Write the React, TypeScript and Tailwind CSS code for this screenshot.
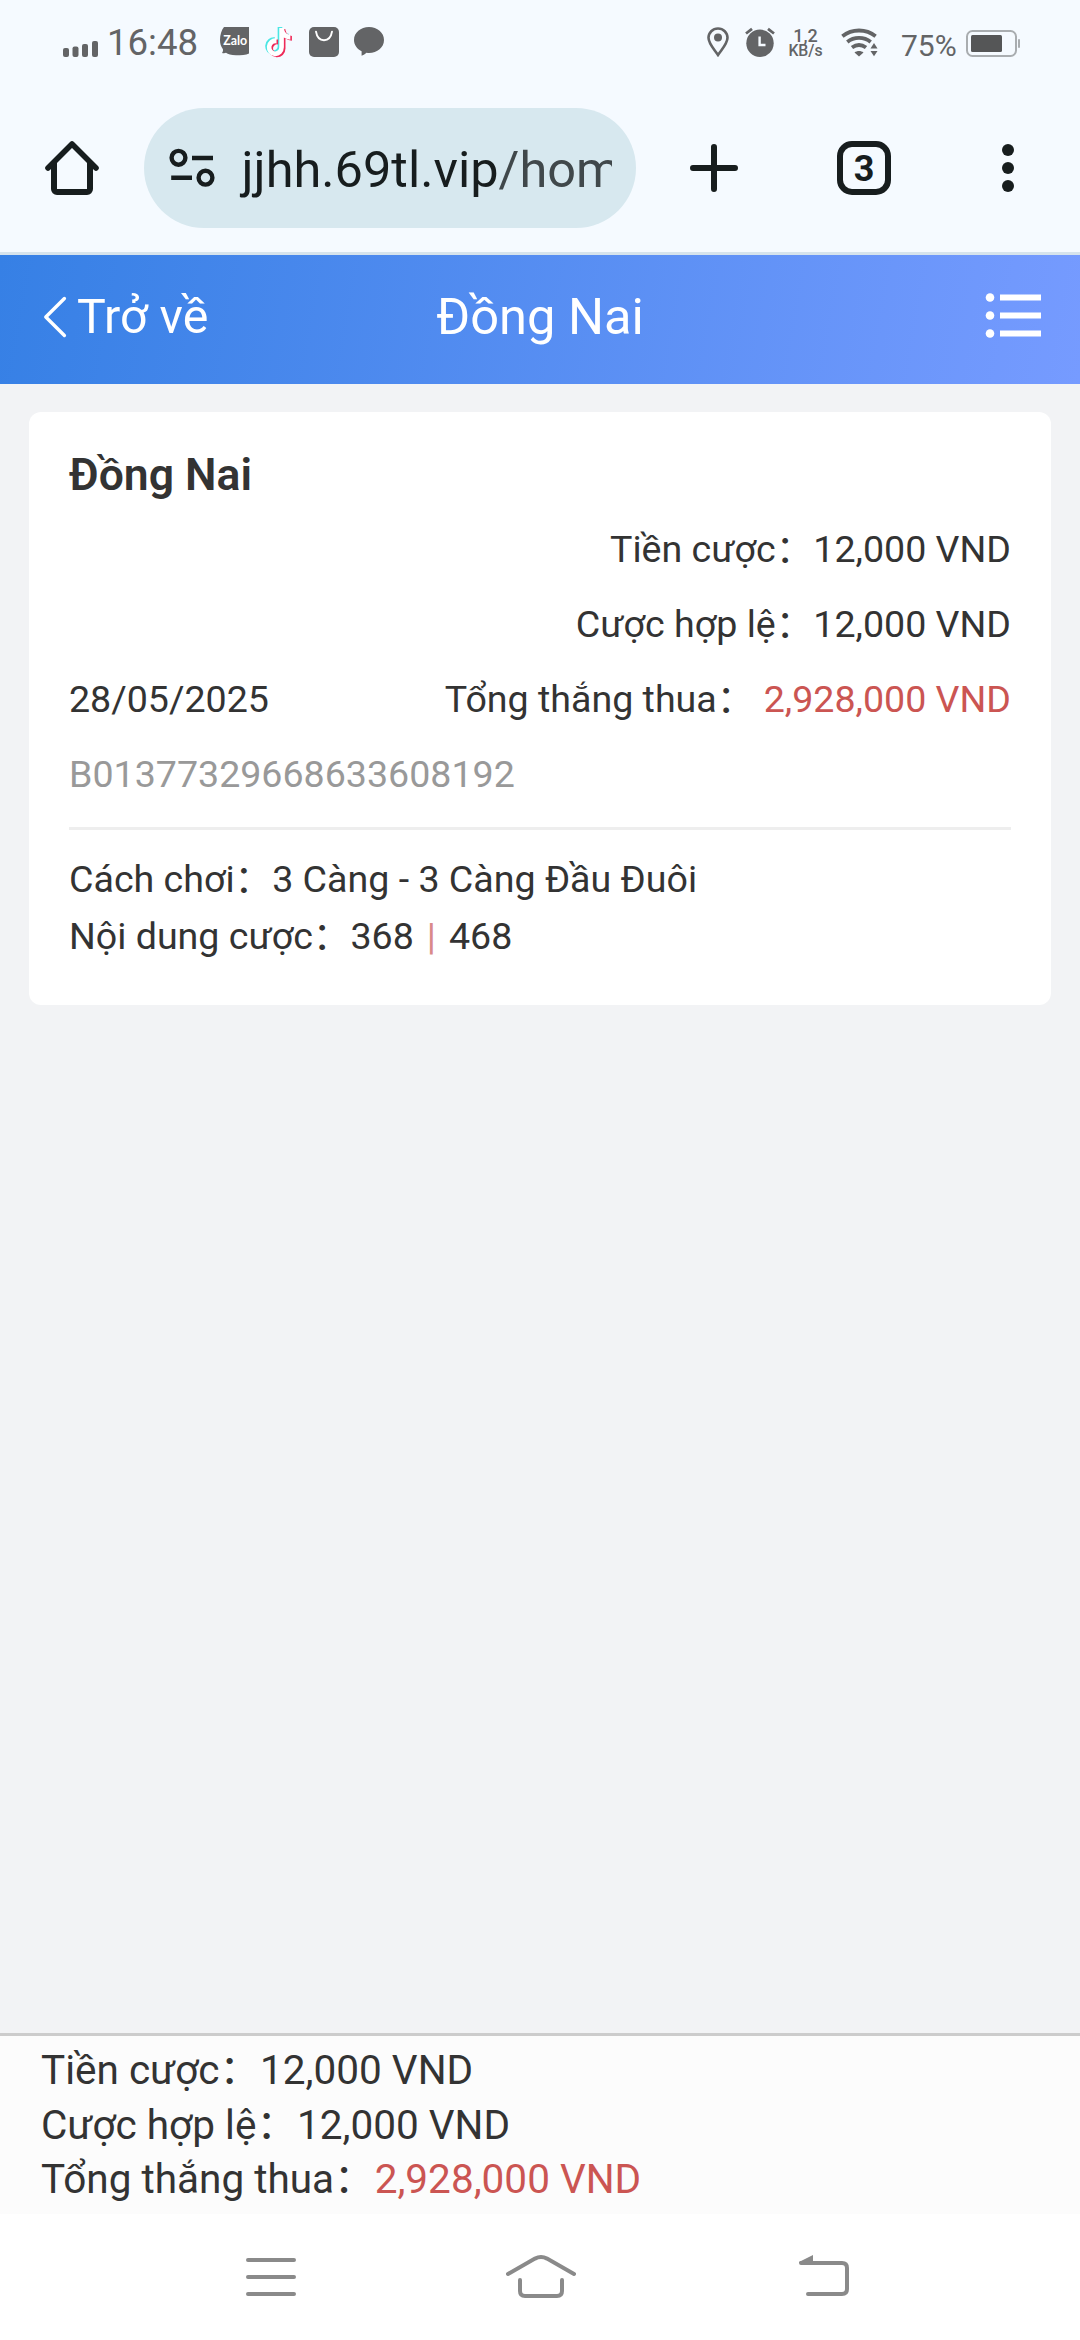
import React from 'react';

interface BetRecord {
  name: string;
  date: string;
  orderId: string;
  stake: string;
  valid: string;
  result: string;
  play: string;
  numbers: [string, string];
}

const record: BetRecord = {
  name: 'Đồng Nai',
  date: '28/05/2025',
  orderId: 'B01377329668633608192',
  stake: '12,000 VND',
  valid: '12,000 VND',
  result: '2,928,000 VND',
  play: '3 Càng - 3 Càng Đầu Đuôi',
  numbers: ['368', '468'],
};

const TIKTOK_NOTE =
  'M448,209.91a210.06,210.06,0,0,1-122.77-39.25V349.38A162.55,162.55,0,1,1,185,188.31V278.2a74.62,74.62,0,1,0,52.23,71.18V0l88,0a121.18,121.18,0,0,0,1.86,22.17h0A122.18,122.18,0,0,0,381,102.39a121.43,121.43,0,0,0,67,20.14Z';

function StatusBar() {
  return (
    <div className="h-[84px] shrink-0 flex items-center pl-[62px] pr-[60px] text-[#636466]">
      {/* Signal */}
      <svg className="w-[36px] h-[30px]" viewBox="0 0 36 30" fill="#636466">
        <rect x="1" y="21" width="6" height="9" rx="2" />
        <rect x="10.5" y="19.5" width="6" height="10.5" rx="2" />
        <rect x="20" y="17" width="6" height="13" rx="2" />
        <rect x="30" y="14" width="6" height="16" rx="2" />
      </svg>
      <span className="ml-[9px] pt-[3px] w-[91px] text-[36.6px] leading-none whitespace-nowrap">16:48</span>

      {/* Notifications */}
      <svg className="ml-[22px] w-[29px] h-[30px]" viewBox="0 0 29 30">
        <path d="M4 0H29V26.5C26 28 21 28.2 16 28.2C11 28.2 8 27.2 6 25.8C5 26.2 3.5 26.3 2 25.9C3 24.8 3.3 23.5 2.8 22C1 19.5 0 17 0 13C0 8 1.5 3 4 0Z" fill="#636466" />
        <text x="3.2" y="18.2" textLength="24" lengthAdjust="spacingAndGlyphs" className="font-['Lato'] font-bold text-[12.5px]" fill="#fff">
          Zalo
        </text>
      </svg>
      <svg className="ml-[16px] w-[28px] h-[31px]" viewBox="0 0 28 31">
        <path d={TIKTOK_NOTE} transform="translate(0.2 0) scale(0.0525 0.055)" fill="#4be6e4" />
        <path d={TIKTOK_NOTE} transform="translate(3.4 2.2) scale(0.0525 0.055)" fill="#ee2a58" />
        <path d={TIKTOK_NOTE} transform="translate(1.8 1.1) scale(0.0525 0.055)" fill="#fff" />
      </svg>
      <svg className="ml-[16px] w-[30px] h-[30px]" viewBox="0 0 30 30">
        <rect width="30" height="30" rx="5" fill="#636466" />
        <path d="M7 4.6C8 10.6 11 13.2 15 13.2C19 13.2 22 10.6 23 4.6" stroke="#fff" strokeWidth="1.9" fill="none" strokeLinecap="round" />
      </svg>
      <svg className="ml-[15px] w-[30px] h-[30px]" viewBox="0 0 30 30" fill="#636466">
        <path d="M15 0C23.3 0 30 5.6 30 13C30 20.4 23.3 26 15 26C13.8 26 13.2 26 12.5 25.8C11.2 27 9.5 28 7.6 28.8V24.2C3 22 0 17.8 0 13C0 5.6 6.7 0 15 0Z" />
      </svg>

      <div className="ml-auto flex items-center">
        <svg className="w-[22px] h-[30px]" viewBox="0 0 22 30">
          <path d="M11 1.5C5.7 1.5 1.5 5.6 1.5 10.8C1.5 16.5 6.5 21.5 11 28C15.5 21.5 20.5 16.5 20.5 10.8C20.5 5.6 16.3 1.5 11 1.5Z" fill="none" stroke="#636466" strokeWidth="2.6" />
          <circle cx="11" cy="10.6" r="4" fill="#636466" />
        </svg>
        {/* Alarm */}
        <svg className="ml-[16px] w-[30px] h-[30px]" viewBox="0 0 30 30">
          <circle cx="15" cy="16.2" r="13.7" fill="#636466" />
          <path d="M1 6.5L7 1.8M29 6.5L23 1.8" stroke="#636466" strokeWidth="2.8" />
          <path d="M14.6 9.5V18H20.5" stroke="#f5faff" strokeWidth="2.4" fill="none" />
        </svg>
        <div className="ml-[13px] pt-[2px] w-[35px] flex flex-col items-center font-medium whitespace-nowrap">
          <span className="text-[18px] leading-[15px]">1,2</span>
          <span className="text-[15.8px] leading-[16px]">KB/s</span>
        </div>
        {/* Wifi with traffic arrows */}
        <svg className="ml-[18px] w-[38px] h-[30px]" viewBox="0 0 38 30">
          <g fill="none" stroke="#636466" strokeWidth="3.8">
            <path d="M1.4 9.2C11 1.6 25 1.6 34.6 9.2" />
            <path d="M6.3 15C13 9.6 23 9.6 29.7 15" />
            <path d="M11 20.6C15.5 17.2 20.5 17.2 25 20.6" />
          </g>
          <path d="M13.5 25.4C16 23.4 20 23.4 22.5 25.4L18 29.5Z" fill="#636466" />
          <path d="M33 16L36.5 21.5H29.5Z" fill="#636466" />
          <path d="M33 29.2L36.5 24H29.5Z" fill="#636466" />
        </svg>
        <span className="ml-[22px] pt-[7px] w-[56px] text-[30px] leading-none">75%</span>
        <svg className="ml-[9px] w-[54px] h-[30px]" viewBox="0 0 54 30">
          <rect x="1" y="4" width="49" height="25" rx="5.5" fill="none" stroke="#a9adb0" strokeWidth="2" />
          <rect x="5" y="8" width="31" height="17" rx="1.5" fill="#555657" />
          <rect x="52" y="12" width="2" height="9" rx="1" fill="#a9adb0" />
        </svg>
      </div>
    </div>
  );
}

function BrowserBar() {
  return (
    <div className="h-[171px] shrink-0 flex items-center pl-[42px] border-b-3 border-[#d6e3ec]">
      <svg className="w-[60px] h-[60px]" viewBox="0 0 60 60" fill="none" stroke="#171d1e" strokeWidth="6">
        <path d="M6 30L30 6L54 30" strokeLinecap="round" strokeLinejoin="round" strokeWidth="5.6" />
        <path d="M12 25V51A3 3 0 0 0 15 54H45A3 3 0 0 0 48 51V25" />
      </svg>

      <div className="ml-[42px] w-[492px] h-[120px] rounded-full bg-[#d7e8ef] flex items-center px-6">
        <svg className="w-[48px] h-[48px] shrink-0" viewBox="0 0 48 48" fill="none" stroke="#171d1e" strokeWidth="4.4">
          <circle cx="10.5" cy="13.8" r="6.9" />
          <circle cx="37.5" cy="33.7" r="6.9" />
          <path d="M24 14H45M3.2 33.7H24" />
        </svg>
        <div className="ml-5 pl-[5.5px] pt-[3px] flex-1 overflow-hidden whitespace-nowrap text-[50.5px] leading-[70px] text-[#171d1e]">
          jjhh.69tl.vip<span className="text-[#40484b]">/hom</span>
        </div>
      </div>

      <svg className="ml-[54px] w-[48px] h-[48px]" viewBox="0 0 48 48" stroke="#171d1e" strokeWidth="6" strokeLinecap="round">
        <path d="M24 3V45M3 24H45" />
      </svg>
      <div className="ml-[99px] pt-[2px] w-[54px] h-[54px] rounded-[15px] border-6 border-[#171d1e] flex items-center justify-center text-[36px] leading-none font-bold text-[#171d1e]">
        3
      </div>
      <svg className="ml-[111px] w-[12px] h-[48px]" viewBox="0 0 12 48" fill="#171d1e">
        <circle cx="6" cy="6" r="6" />
        <circle cx="6" cy="24" r="6" />
        <circle cx="6" cy="42" r="6" />
      </svg>
    </div>
  );
}

function PageHeader() {
  return (
    <header className="h-[129px] shrink-0 grid grid-cols-[1fr_auto_1fr] items-center px-[38px] pb-[5px] bg-[linear-gradient(100deg,#3680e5,#769bff)] text-white">
      <button className="flex items-center gap-[9px] pl-[4px] text-[48.3px] leading-none whitespace-nowrap">
        <svg className="w-[26px] h-[44px]" viewBox="0 0 26 44" fill="none" stroke="#fff" strokeWidth="3.4" strokeLinecap="round" strokeLinejoin="round">
          <path d="M22.4 3.5L3.8 22L22.4 40.5" />
        </svg>
        Trở về
      </button>
      <h1 className="text-[50.6px] leading-none">{record.name}</h1>
      <svg className="justify-self-end w-[57px] h-[48px]" viewBox="0 0 57 48" fill="#fff">
        <circle cx="5" cy="4.5" r="4.3" />
        <circle cx="5" cy="22.5" r="4.3" />
        <circle cx="5" cy="40.5" r="4.3" />
        <path d="M15 1.5H56V7.5H15ZM15 19.5H56V25.5H15ZM15 37.5H56V43.5H15Z" />
      </svg>
    </header>
  );
}

function BetCard() {
  return (
    <div className="mx-[29px] mt-7 h-[593px] rounded-xl bg-white px-10 pt-[33px] text-[37.6px] leading-[75px] text-[#333]">
      <h2 className="mb-[7px] text-[44.5px] leading-[60px] font-semibold">{record.name}</h2>
      <div className="text-right">Tiền cược：{record.stake}</div>
      <div className="text-right">Cược hợp lệ：{record.valid}</div>
      <div className="flex justify-between">
        <span>{record.date}</span>
        <span>
          Tổng thắng thua： <span className="text-[#cb5552]">{record.result}</span>
        </span>
      </div>
      <div className="text-[#999]">{record.orderId}</div>
      <div className="mt-[15px] pt-[21px] border-t-3 border-[#eee] leading-[57px]">
        <div>Cách chơi：{record.play}</div>
        <div>
          Nội dung cược：{record.numbers[0]}
          <span className="mx-[13px] text-[#d98a89]">|</span>
          {record.numbers[1]}
        </div>
      </div>
    </div>
  );
}

function Summary() {
  return (
    <footer className="h-[181px] shrink-0 border-t-3 border-[#ccc] bg-[#fcfcfc] pl-[41px] pt-[7px] text-[40.5px] leading-[54.5px] text-[#333]">
      <div>Tiền cược：{record.stake}</div>
      <div>Cược hợp lệ：{record.valid}</div>
      <div>
        Tổng thắng thua：<span className="text-[#cb5552]">{record.result}</span>
      </div>
    </footer>
  );
}

function SystemNav() {
  return (
    <nav className="h-[126px] shrink-0 flex items-center pl-[246px] bg-white">
      <svg className="w-[50px] h-[44px]" viewBox="0 0 50 44" stroke="#8a8a8a" strokeWidth="4" strokeLinecap="round">
        <path d="M2 5H48M2 22H48M2 39H48" />
      </svg>
      <svg className="ml-[210px] w-[70px] h-[44px]" viewBox="0 0 70 44" fill="none" stroke="#8a8a8a" strokeWidth="4" strokeLinecap="round">
        <path d="M2 19L29 3.6Q35 0.6 41 3.6L68 19" />
        <path d="M14 25V36Q14 41 19 41H51Q56 41 56 36V25" />
      </svg>
      <svg className="ml-[222px] w-[52px] h-[44px]" viewBox="0 0 52 44" fill="none" stroke="#8a8a8a" strokeWidth="4" strokeLinecap="round">
        <path d="M3 8H44Q49 8 49 13V34Q49 39 44 39H10" />
        <path d="M1 7L15 0V8H1Z" fill="#8a8a8a" stroke="none" />
      </svg>
    </nav>
  );
}

export default function App() {
  return (
    <div className="w-[1080px] h-[2340px] flex flex-col overflow-hidden bg-[#f5faff] font-['Roboto','Noto_Sans_CJK_SC',sans-serif]">
      <StatusBar />
      <BrowserBar />
      <PageHeader />
      <main className="flex-1 flow-root bg-[#f2f3f5]">
        <BetCard />
      </main>
      <Summary />
      <SystemNav />
    </div>
  );
}
